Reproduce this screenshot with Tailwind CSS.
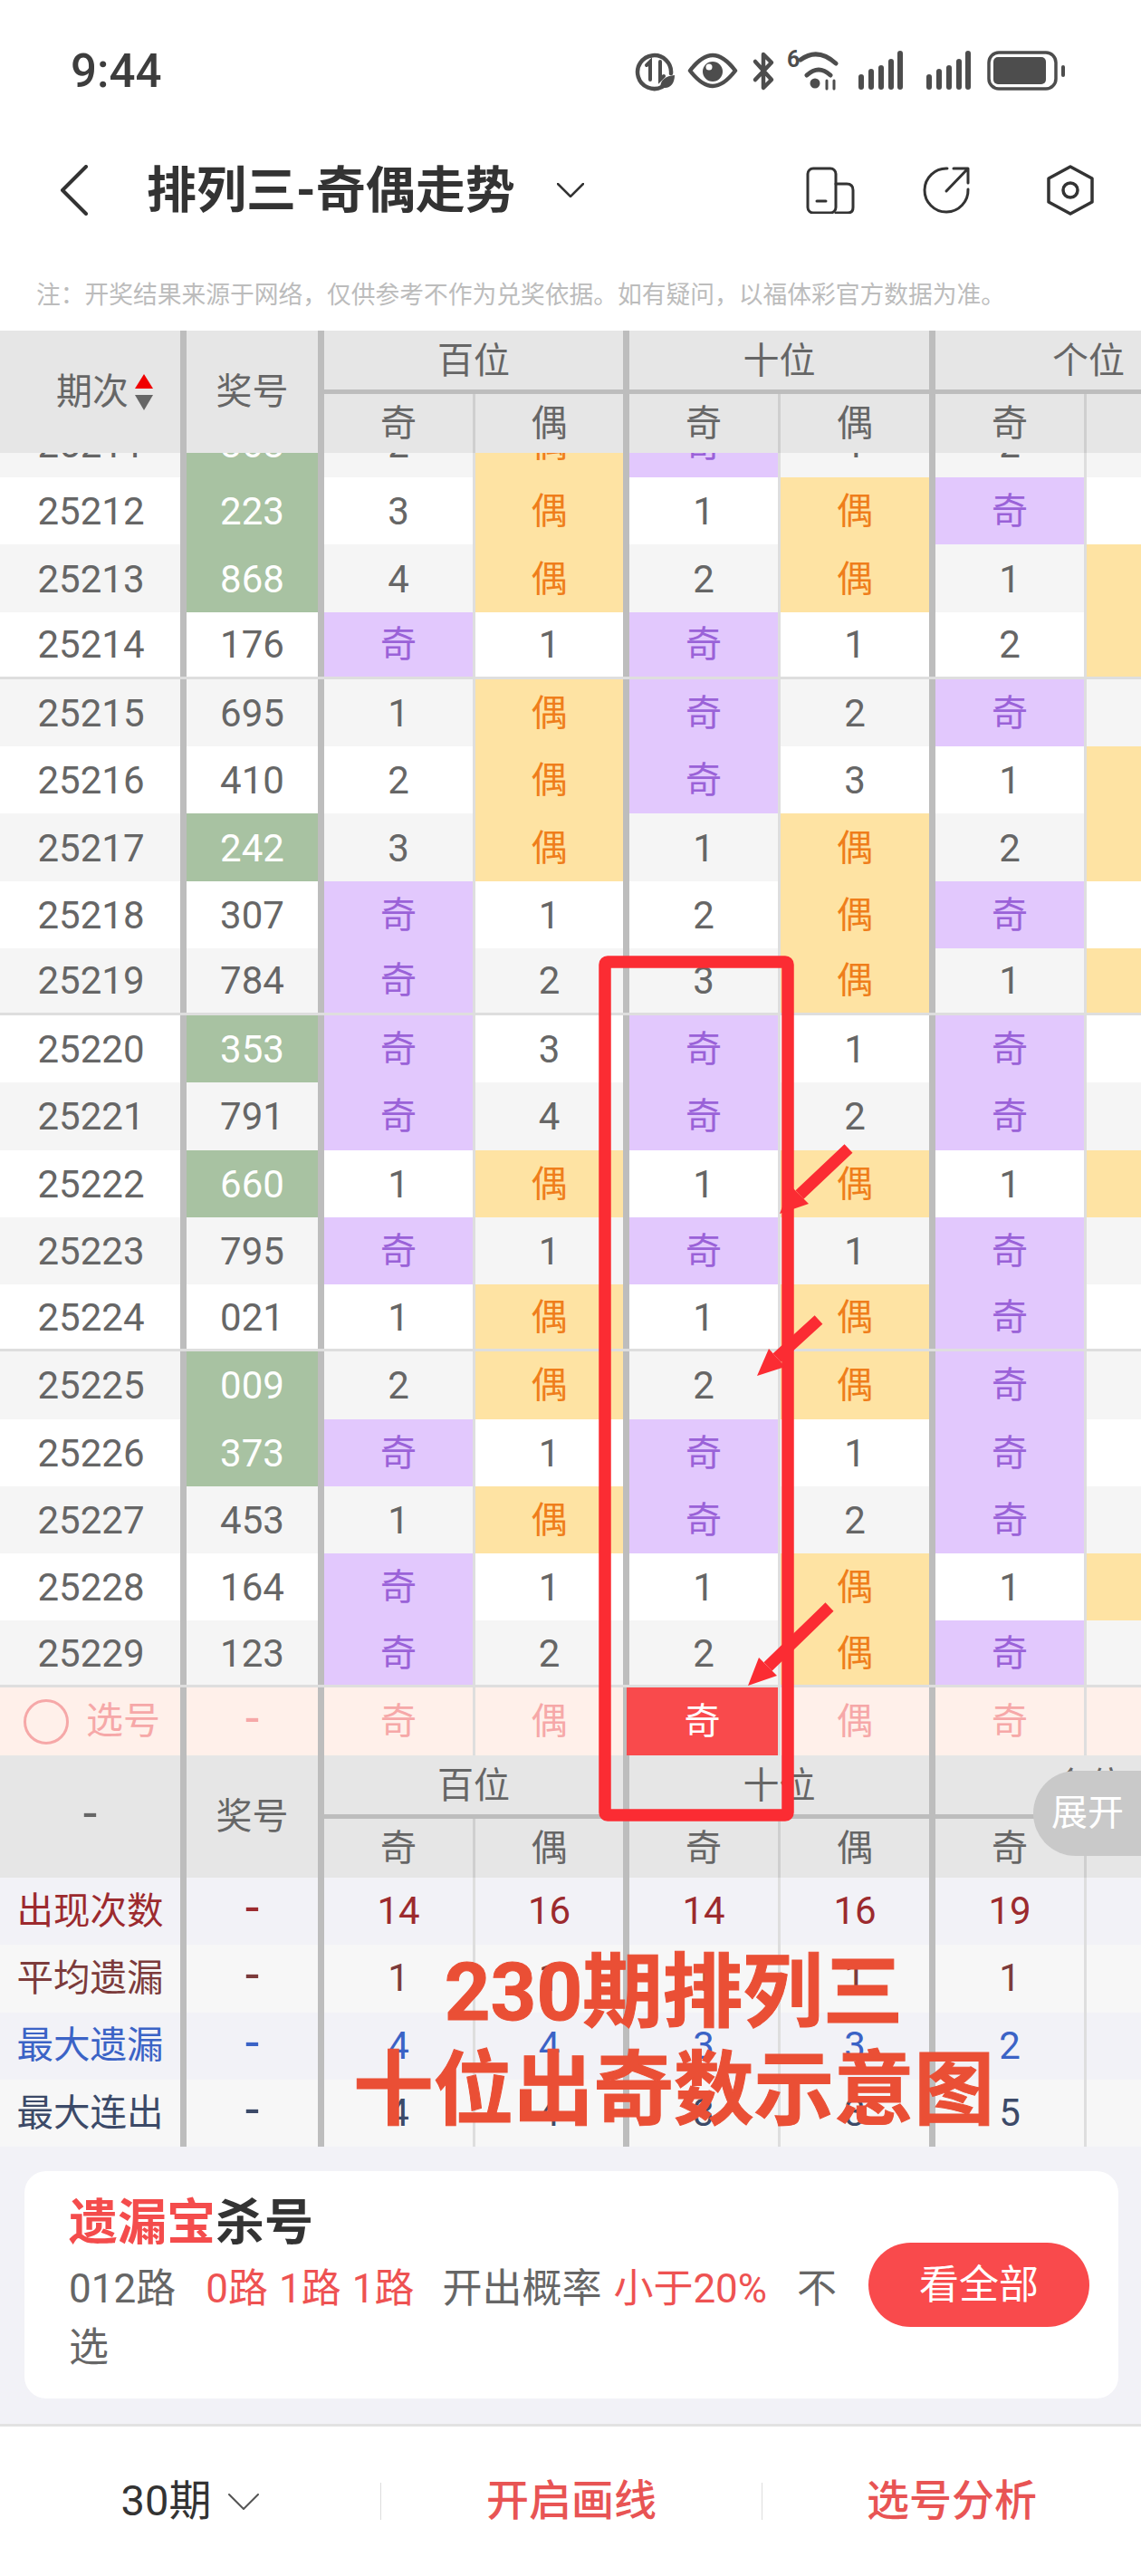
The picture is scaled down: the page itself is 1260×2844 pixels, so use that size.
<!DOCTYPE html>
<html lang="zh-CN">
<head>
    <meta charset="UTF-8">
    <meta name="viewport" content="width=device-width, initial-scale=1.0">
    <title>排列三-奇偶走势</title>
    <script src="https://cdn.jsdelivr.net/npm/@tailwindcss/browser@4"></script>
</head>
<body class="bg-white">
<div class="relative w-[1260px] h-[2844px] overflow-hidden bg-white text-[#333] [font-family:Roboto,'Noto_Sans_CJK_SC',sans-serif]">

    <!-- 状态栏 -->
    <div class="flex h-[156px] items-center justify-between pl-[78px] pr-[80px]">
        <span class="text-[51px] font-medium leading-none text-[#3d3d3d]">9:44</span>
        <svg class="mt-[4px]" width="480" height="60" viewBox="700 50 480 60" fill="none" stroke="#4d4d4d" stroke-linecap="round">
            <path d="M731 96A18.5 18.5 0 1 1 741 81" stroke-width="4.5"/>
            <path d="M714 72L718 68V88M729 68V88L733 84" stroke-width="4"/>
            <path d="M729 98C729 88 735 84 745 83C745 92 740 98 733 97Z" fill="#4d4d4d" stroke="none"/>
            <path d="M762 78C772 65 780 61 787 61C794 61 802 65 812 78C802 91 794 95 787 95C780 95 772 91 762 78Z" stroke-width="4.5" stroke-linejoin="round"/>
            <circle cx="787" cy="79" r="11" fill="#4d4d4d" stroke="none"/>
            <circle cx="783" cy="74" r="3.5" fill="#fff" stroke="none"/>
            <path d="M834 68L852 88L843 97V60L852 69L834 88" stroke-width="4.5" stroke-linejoin="round"/>
            <text x="869" y="74" font-size="25" font-weight="700" fill="#4d4d4d" stroke="none">6</text>
            <path d="M884 66Q903 52 923 70M891 83Q904 71 917 83" stroke-width="5"/>
            <circle cx="900" cy="92" r="5.5" fill="#4d4d4d" stroke="none"/>
            <path d="M913 89V98M921 89V98" stroke-width="3"/>
            <path d="M951 85V96M962 79V96M973 75V96M984 68V96M994 59V96M1026 85V96M1037 79V96M1048 75V96M1059 68V96M1069 59V96" stroke-width="6"/>
            <rect x="1092" y="58" width="74" height="40" rx="11" stroke-width="3.5"/>
            <rect x="1097" y="63" width="58" height="30" rx="5" fill="#4d4d4d" stroke="none"/>
            <rect x="1172" y="72" width="4" height="13" rx="2" fill="#4d4d4d" stroke="none"/>
        </svg>
    </div>

    <!-- 标题栏 -->
    <div class="flex h-[108px] items-center pl-[66px] pr-[52px]">
        <svg width="31" height="56" viewBox="0 0 31 56" fill="none" stroke="#333" stroke-width="4" stroke-linecap="round" stroke-linejoin="round">
            <path d="M29 2L3 28L29 54"/>
        </svg>
        <h1 class="ml-[65px] text-[55px] font-bold leading-none text-[#333]">排列三-奇偶走势</h1>
        <svg class="ml-[46px]" width="30" height="16" viewBox="0 0 30 16" fill="none" stroke="#333" stroke-width="2.5" stroke-linecap="round">
            <path d="M1 1L15 15L29 1"/>
        </svg>
        <svg class="ml-auto" width="54" height="52" viewBox="0 0 54 52" fill="none" stroke="#333" stroke-width="3" stroke-linecap="round">
            <rect x="2" y="2" width="31" height="49" rx="6"/>
            <path d="M33 19H45Q52 19 52 26V45Q52 51 46 51H33M12 38H22"/>
        </svg>
        <svg class="ml-[75px]" width="54" height="52" viewBox="0 0 54 52" fill="none" stroke="#333" stroke-width="3" stroke-linecap="round" stroke-linejoin="round">
            <path d="M27 2A24 24 0 1 0 50 25"/>
            <path d="M26 27L49 3M34 2H50V18"/>
        </svg>
        <svg class="ml-[83px]" width="52" height="56" viewBox="0 0 52 56" fill="none" stroke="#333" stroke-width="3.5" stroke-linejoin="round">
            <path d="M26 2L50 15V41L26 54L2 41V15Z"/>
            <circle cx="26" cy="28" r="8"/>
        </svg>
    </div>

    <!-- 提示 -->
    <div class="h-[101px] pt-[44px] pl-[40px] text-[26.75px] leading-[36px] text-[#bcbcbc] whitespace-nowrap">注：开奖结果来源于网络，仅供参考不作为兑奖依据。如有疑问，以福体彩官方数据为准。</div>

    <!-- 走势表 -->
    <div id="tableHead"></div>
    <div class="h-[1363px] overflow-hidden">
        <div id="tableRows" class="-mt-[47px]"></div>
    </div>
    <div id="pickRow"></div>
    <div id="tableFoot"></div>
    <div id="tableStats"></div>

    <!-- 遗漏宝 -->
    <div class="h-[306px] bg-[#f2f2f7] px-[27px] pt-[27px]">
        <div class="flex h-[251px] w-[1208px] items-center rounded-[24px] bg-white pl-[49px] pr-[32px]">
            <div class="w-[860px] shrink-0 self-start pt-[27px]">
                <div class="text-[54px] font-bold leading-[62px] text-[#333]"><span class="text-[#f44c4c]">遗漏宝</span>杀号</div>
                <p class="mt-[9px] text-[44px] leading-[65px] text-[#666]">012路<span class="ml-[33px] text-[#ee5252]">0路</span><span class="ml-[12px] text-[#ee5252]">1路</span><span class="ml-[12px] text-[#ee5252]">1路</span><span class="ml-[31px]">开出概率</span><span class="ml-[13px] text-[#ee5252]">小于20%</span><span class="ml-[33px]">不选</span></p>
            </div>
            <button class="ml-auto h-[93px] w-[244px] rounded-full bg-[#f94a4c] text-[44px] text-white">看全部</button>
        </div>
    </div>

    <!-- 底部栏 -->
    <div class="flex h-[168px] items-center border-t-[3px] border-[#e2e2e2] bg-white">
        <div class="flex h-[41px] w-[421px] items-center justify-center gap-[19px] border-r border-[#dddddd] text-[47px] text-[#333]">
            <span>30期</span>
            <svg width="34" height="18" viewBox="0 0 34 18" fill="none" stroke="#555" stroke-width="2" stroke-linecap="round"><path d="M1 1L17 17L33 1"/></svg>
        </div>
        <div class="flex h-[41px] w-[421px] items-center justify-center border-r border-[#dddddd] text-[47px] font-medium text-[#e85454]">开启画线</div>
        <div class="flex h-[41px] w-[418px] items-center justify-center text-[47px] font-medium text-[#e85454]">选号分析</div>
    </div>

    <!-- 展开 -->
    <div class="absolute right-0 top-[1955px] flex h-[94px] w-[119px] items-center rounded-l-[47px] bg-[#c9c9c9] pl-[20px] text-[40px] text-white">展开</div>

    <!-- 标注 -->
    <svg class="absolute left-0 top-0" width="1260" height="2844" viewBox="0 0 1260 2844" fill="none">
        <rect x="668" y="1062" width="202" height="942" rx="3" stroke="#fb2c33" stroke-width="13.5"/>
        <path d="M937 1268L883 1319M904 1457L858 1499M916 1774L848 1840" stroke="#fb2c33" stroke-width="13"/>
        <path d="M861 1340L893 1329L873 1309ZM836 1519L867 1509L849 1489ZM826 1861L858 1850L838 1830Z" fill="#fb2c33"/>
    </svg>
    <div class="absolute left-[344px] top-[2146px] w-[800px] text-center text-[88.5px] font-bold leading-[108px] whitespace-nowrap text-[#ea4f35] [-webkit-text-stroke:1px_#ea4f35]">230期排列三<br>十位出奇数示意图</div>
</div>

<script>
    // 期次, 奖号, 是否组选(绿底), 百奇, 百偶, 十奇, 十偶, 个奇, 个偶
    const rows = [
        ['25211', '868', 1, '2', '偶', '奇', '1', '2', '3'],
        ['25212', '223', 1, '3', '偶', '1', '偶', '奇', '4'],
        ['25213', '868', 1, '4', '偶', '2', '偶', '1', '偶'],
        ['25214', '176', 0, '奇', '1', '奇', '1', '2', '偶'],
        ['25215', '695', 0, '1', '偶', '奇', '2', '奇', '1'],
        ['25216', '410', 0, '2', '偶', '奇', '3', '1', '偶'],
        ['25217', '242', 1, '3', '偶', '1', '偶', '2', '偶'],
        ['25218', '307', 0, '奇', '1', '2', '偶', '奇', '1'],
        ['25219', '784', 0, '奇', '2', '3', '偶', '1', '偶'],
        ['25220', '353', 1, '奇', '3', '奇', '1', '奇', '1'],
        ['25221', '791', 0, '奇', '4', '奇', '2', '奇', '2'],
        ['25222', '660', 1, '1', '偶', '1', '偶', '1', '偶'],
        ['25223', '795', 0, '奇', '1', '奇', '1', '奇', '1'],
        ['25224', '021', 0, '1', '偶', '1', '偶', '奇', '2'],
        ['25225', '009', 1, '2', '偶', '2', '偶', '奇', '3'],
        ['25226', '373', 1, '奇', '1', '奇', '1', '奇', '4'],
        ['25227', '453', 0, '1', '偶', '奇', '2', '奇', '5'],
        ['25228', '164', 0, '奇', '1', '1', '偶', '1', '偶'],
        ['25229', '123', 0, '奇', '2', '2', '偶', '奇', '1']
    ];

    const gridCols = 'grid w-[1371px] grid-cols-[206px_152px_167px_170px_167px_171px_167px_171px]';
    const thick = 'border-r-[7px] border-[#bdbdbd]';
    const thin = 'border-r-[3px] border-[#dedede]';
    const center = 'flex items-center justify-center';
    const lowered = 'pt-[2px]';
    const edge = [thin, thick, thin, thick, thin, ''];
    const dash = '<span class="-translate-y-[4px] text-[56px] leading-none">-</span>';

    function cell(value, i) {
        let tone = 'text-[42px] leading-none text-[#666]';
        if (value === '奇') tone = 'leading-none bg-[#e2c8fd] text-[#9a62d8]';
        if (value === '偶') tone = 'leading-none bg-[#fee3a3] text-[#ef7e1b]';
        return `<div class="${center} ${lowered} ${edge[i]} ${tone}">${value}</div>`;
    }

    document.getElementById('tableRows').innerHTML = rows.map((r, idx) => {
        const stripe = idx % 2 === 0 ? 'bg-[#f5f5f5]' : 'bg-white';
        const split = idx % 5 === 3 ? 'border-b-[3px] border-[#dedede]' : '';
        const numTone = r[2] ? 'bg-[#a8c2a2] text-white' : 'text-[#666]';
        return `<div class="${gridCols} grid-rows-[1fr] ${stripe} ${split} h-[74.24px] text-[40px] text-[#666]">
            <div class="${center} ${lowered} pl-[2px] ${thick} text-[42px] leading-none">${r[0]}</div>
            <div class="${center} ${lowered} ${thick} ${numTone} text-[42px] leading-none">${r[1]}</div>
            ${r.slice(3).map(cell).join('')}
        </div>`;
    }).join('');

    // 选号行
    const pickCells = ['奇', '偶', '奇', '偶', '奇', '偶'].map((v, i) => {
        if (i === 2) return `<div class="${center} -ml-[3px] ${thin} bg-[#f94a4c] text-white">${v}</div>`;
        return `<div class="${center} ${edge[i]}">${v}</div>`;
    }).join('');
    document.getElementById('pickRow').innerHTML = `<div class="${gridCols} grid-rows-[1fr] h-[75px] bg-[#fff0ea] text-[40px] leading-none text-[#f6a8a8]">
        <div class="flex items-center ${thick} pl-[26px]"><span class="h-[50px] w-[50px] rounded-full border-[3px] border-[#f6a8a8]"></span><span class="ml-[19px] text-[41px]">选号</span></div>
        <div class="${center} ${thick}">${dash}</div>
        ${pickCells}
    </div>`;

    // 表头（顶部和底部共用）
    function headHtml(firstCell) {
        const sub = ['奇', '偶', '奇', '偶', '奇', '偶'].map((v, i) => {
            const line = i % 2 === 0 ? 'border-r-[3px] border-[#cfcfcf]' : (i < 5 ? thick : '');
            return `<div class="${center} ${line}">${v}</div>`;
        }).join('');
        const groups = ['百位', '十位', '个位'].map((v, i) => {
            const line = i < 2 ? 'border-r-[7px]' : '';
            return `<div class="${center} pt-[2px] col-span-2 border-b-[5px] ${line} border-[#bdbdbd]">${v}</div>`;
        }).join('');
        return `<div class="${gridCols} grid-rows-[70px_65px] h-[135px] bg-[#e6e6e6] text-[40px] text-[#666]">
            <div class="row-span-2 ${thick}">${firstCell}</div>
            <div class="row-span-2 ${center} ${thick}">奖号</div>
            ${groups}
            ${sub}
        </div>`;
    }

    document.getElementById('tableHead').innerHTML = headHtml(`<div class="flex h-full items-center pl-[62px]">期次
        <svg class="ml-[7px]" width="20" height="40" viewBox="0 0 20 40"><path d="M10 0L20 16H0Z" fill="#f00000"/><path d="M0 23H20L10 40Z" fill="#666"/></svg></div>`);
    document.getElementById('tableFoot').innerHTML = headHtml(`<div class="${center} h-full">${dash}</div>`);

    // 统计行
    const stats = [
        ['出现次数', 'text-[#9c2a2e]', 'bg-[#f2f2f7]', ['14', '16', '14', '16', '19', '11']],
        ['平均遗漏', 'text-[#7c3b3b]', 'bg-[#f7f7f7]', ['1', '1', '1', '1', '1', '1']],
        ['最大遗漏', 'text-[#3b63c6]', 'bg-[#f2f2f7]', ['4', '4', '3', '3', '2', '5']],
        ['最大连出', 'text-[#3c4a68]', 'bg-[#f7f7f7]', ['4', '4', '3', '3', '5', '2']]
    ];
    document.getElementById('tableStats').innerHTML = stats.map(s => `<div class="${gridCols} grid-rows-[1fr] h-[74.25px] text-[40.5px] leading-none ${s[1]} ${s[2]}">
        <div class="${center} ${thick}">${s[0]}</div>
        <div class="${center} ${thick}">${dash}</div>
        ${s[3].map((v, i) => `<div class="${center} ${edge[i]} text-[42px]">${v}</div>`).join('')}
    </div>`).join('');
</script>
</body>
</html>
